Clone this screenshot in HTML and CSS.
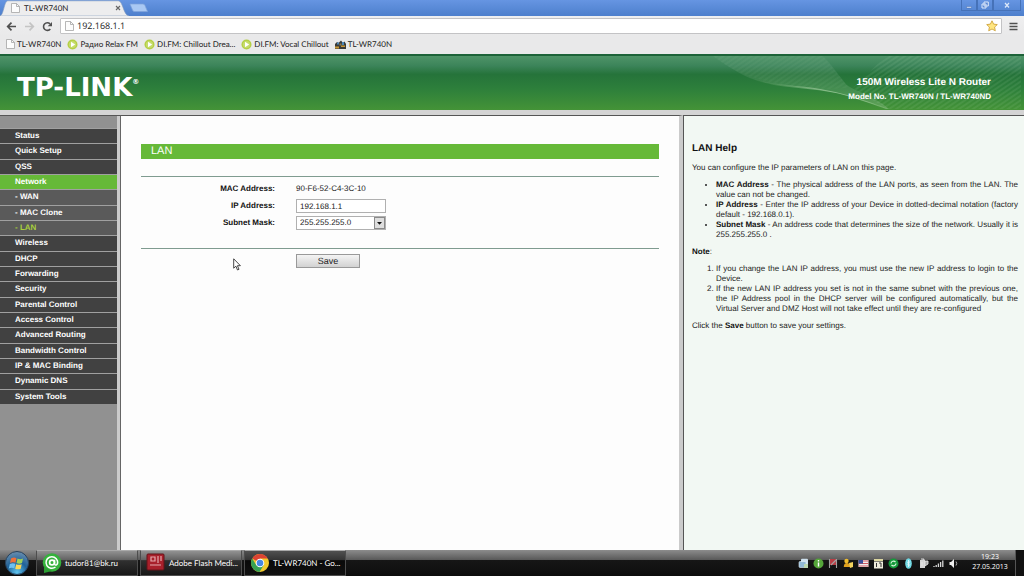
FILE: index.html
```html
<!DOCTYPE html>
<html lang="en">
<head>
<meta charset="utf-8">
<title>TL-WR740N</title>
<link rel="stylesheet" href="styles.css">
</head>
<body>
<svg width="0" height="0" class="defs" aria-hidden="true">
  <symbol id="page" viewBox="0 0 9 10"><path d="M.5.5h5l3 3v6h-8z" fill="#fcfcfc" stroke="#a5a5a5" stroke-width=".8"/><path d="M5.5.5v3h3" fill="none" stroke="#a5a5a5" stroke-width=".8"/></symbol>
  <symbol id="play" viewBox="0 0 11 11"><circle cx="5.500" cy="5.500" r="5" fill="#b4cf45"/><circle cx="5.500" cy="5.500" r="3.600" fill="#c6dc6c"/><path d="M4 2.700l4.200 2.800L4 8.300z" fill="#fff"/></symbol>
</svg>

<header class="browser">
  <div class="titlebar">
    <div class="tab">
      <svg class="tab-shape" viewBox="0 0 132 16" preserveAspectRatio="none"><path d="M0 16C4 15 4 1 8 .8H121C126 1 126 15 132 16z" fill="#ededee" stroke="#8099bd" stroke-width=".6"/></svg>
      <svg class="ico-page"><use href="#page"/></svg>
      <span>TL-WR740N</span>
      <button class="tab-close" aria-label="Close tab"><svg viewBox="0 0 6 6"><path d="M1 1l4 4M5 1L1 5" stroke="#666" stroke-width="1.100"/></svg></button>
    </div>
    <button class="new-tab" aria-label="New tab"><svg viewBox="0 0 20 10"><path d="M1 1h13q1.500 0 2 1.500l2.500 6h-13q-1.500 0-2-1.500z" fill="#a9c8f3" stroke="#7fa3da" stroke-width=".7"/></svg></button>
    <div class="window-buttons">
      <button aria-label="Minimize"><svg viewBox="0 0 8 8"><path d="M1.500 5.500h5v1.500h-5z" fill="#dce8fa" stroke="#385d9e" stroke-width=".4"/></svg></button>
      <button aria-label="Restore"><svg viewBox="0 0 8 8"><path d="M3 1h4.300v4H3zM1 3h4v4H1z" fill="#5b88d4" stroke="#dce8fa"/></svg></button>
      <button class="wide" aria-label="Close"><svg viewBox="0 0 8 8"><path d="M2 2l4 4.500M6 2L2 6.500" stroke="#dce8fa" stroke-width="1.200"/></svg></button>
    </div>
  </div>
  <div class="toolbar">
    <button aria-label="Back"><svg viewBox="0 0 11 10"><path d="M10 5H2M5.500 1.200L1.700 5l3.800 3.800" fill="none" stroke="#505050" stroke-width="1.700"/></svg></button>
    <button aria-label="Forward"><svg viewBox="0 0 11 10"><path d="M1 5h8M5.500 1.200L9.300 5 5.500 8.800" fill="none" stroke="#c4c4c4" stroke-width="1.700"/></svg></button>
    <button aria-label="Reload"><svg viewBox="0 0 11 10"><path d="M8.300 7.500A3.800 3.800 0 1 1 8 2.400" fill="none" stroke="#505050" stroke-width="1.600"/><path d="M10 .5v4.300H5.700z" fill="#505050"/></svg></button>
    <div class="omnibox">
      <svg class="ico-page"><use href="#page"/></svg>
      <input type="text" value="192.168.1.1" aria-label="Address">
      <button class="star" aria-label="Bookmark"><svg viewBox="0 0 12 12"><path d="M6 .8l1.600 3.300 3.700.5-2.700 2.500.7 3.700L6 9l-3.300 1.800.7-3.700L.7 4.600l3.700-.5z" fill="#ffe680" stroke="#c99b2e" stroke-width=".8"/></svg></button>
    </div>
    <button class="menu-button" aria-label="Menu"><svg viewBox="0 0 9 9"><path d="M.5 1.500h8M.5 4.500h8M.5 7.500h8" stroke="#505050" stroke-width="1.700"/></svg></button>
  </div>
  <nav class="bookmarks">
    <a href="#"><svg class="ico-page"><use href="#page"/></svg>TL-WR740N</a>
    <a href="#"><svg><use href="#play"/></svg>Радио Relax FM</a>
    <a href="#"><svg><use href="#play"/></svg>DI.FM: Chillout Drea...</a>
    <a href="#"><svg><use href="#play"/></svg>DI.FM: Vocal Chillout</a>
    <a href="#"><svg viewBox="0 0 11 11"><path d="M0 5l2-2 1.500 1L6 1.500 8 4l1.500-1.500L11 5v5H0z" fill="#3a3a38"/><path d="M2 3.500h2v2H2zM7 3h2v3H7z" fill="#4a86b8"/><path d="M0 7.500h4v2H0zM6 6.500h4v1.500H6z" fill="#c99735"/><path d="M4.500 4.500h2v2h-2z" fill="#8a7a50"/></svg>TL-WR740N</a>
  </nav>
</header>

<div class="banner">
  <svg class="banner-art" viewBox="0 0 320 56" preserveAspectRatio="none" aria-hidden="true">
    <defs>
      <pattern id="lines" width="5" height="4" patternUnits="userSpaceOnUse" patternTransform="rotate(-35)"><path d="M0 1h5" stroke="#b9e2bd" stroke-opacity=".25" stroke-width=".8"/></pattern>
      <linearGradient id="glow" x1="0" x2="0" y1="0" y2="1"><stop offset="0" stop-color="#fff" stop-opacity=".03"/><stop offset="1" stop-color="#fff" stop-opacity=".16"/></linearGradient>
      <linearGradient id="streak" x1="0" x2="1" y1="0" y2="0"><stop offset="0" stop-color="#c8e8c0" stop-opacity="0"/><stop offset=".6" stop-color="#c8e8c0" stop-opacity=".55"/><stop offset="1" stop-color="#c8e8c0" stop-opacity=".3"/></linearGradient>
    </defs>
    <path d="M12 0C32 14 44 24 68 28c30 5 56 6 80 14 18 6 30 9 40 13C172 40 150 36 144 28 136 18 130 8 122 0z" fill="url(#glow)"/>
    <path d="M50 23c20 7 40 7 62 10 20 3 40 9 54 14 10 4 18 6 22 8h-3c-10-4-26-9-40-14-22-7-50-7-72-11-10-2-18-4-23-7z" fill="url(#streak)"/>
    <path d="M185 0h135v55H188c-10-6-24-12-36-22z" fill="url(#lines)"/>
    <path d="M12 0h110l26 33-30 2C70 28 40 24 12 0z" fill="url(#lines)" fill-opacity=".5"/>
  </svg>
  <div class="logo">TP-LINK<sup>®</sup></div>
  <div class="model">
    <p class="model-name">150M Wireless Lite N Router</p>
    <p class="model-number">Model No. TL-WR740N / TL-WR740ND</p>
  </div>
</div>

<div class="frames">
  <nav class="sidebar">
    <ul>
      <li><a href="#">Status</a></li>
      <li><a href="#">Quick Setup</a></li>
      <li><a href="#">QSS</a></li>
      <li><a href="#" class="open">Network</a></li>
      <li><a href="#" class="sub">- WAN</a></li>
      <li><a href="#" class="sub">- MAC Clone</a></li>
      <li><a href="#" class="sub current">- LAN</a></li>
      <li><a href="#">Wireless</a></li>
      <li><a href="#">DHCP</a></li>
      <li><a href="#">Forwarding</a></li>
      <li><a href="#">Security</a></li>
      <li><a href="#">Parental Control</a></li>
      <li><a href="#">Access Control</a></li>
      <li><a href="#">Advanced Routing</a></li>
      <li><a href="#">Bandwidth Control</a></li>
      <li><a href="#">IP &amp; MAC Binding</a></li>
      <li><a href="#">Dynamic DNS</a></li>
      <li><a href="#">System Tools</a></li>
    </ul>
  </nav>

  <main class="content">
    <h1>LAN</h1>
    <form>
      <div class="fields">
        <span class="label">MAC Address:</span><span>90-F6-52-C4-3C-10</span>
        <label class="label" for="ip">IP Address:</label><input id="ip" type="text" value="192.168.1.1">
        <label class="label" for="mask">Subnet Mask:</label>
        <div class="select">
          <select id="mask"><option>255.255.255.0</option></select>
          <svg viewBox="0 0 11 12" aria-hidden="true"><rect x=".5" y=".5" width="10" height="11" fill="#dedede" stroke="#8a8a8a"/><path d="M3 5h5L5.500 7.800z" fill="#111"/></svg>
        </div>
      </div>
      <button class="save" type="button">Save</button>
    </form>
    <svg class="pointer" viewBox="0 0 8 13" aria-hidden="true"><path d="M.7.8v9.400l2.200-2 1.600 3.800 1.500-.7-1.600-3.600h3z" fill="#fff" stroke="#333" stroke-width=".9"/></svg>
  </main>

  <aside class="help">
    <h2>LAN Help</h2>
    <p>You can configure the IP parameters of LAN on this page.</p>
    <ul>
      <li><b>MAC Address</b> - The physical address of the LAN ports, as seen from the LAN. The value can not be changed.</li>
      <li><b>IP Address</b> - Enter the IP address of your Device in dotted-decimal notation (factory default - 192.168.0.1).</li>
      <li><b>Subnet Mask</b> - An address code that determines the size of the network. Usually it is 255.255.255.0 .</li>
    </ul>
    <p><b>Note</b>:</p>
    <ol>
      <li>If you change the LAN IP address, you must use the new IP address to login to the Device.</li>
      <li>If the new LAN IP address you set is not in the same subnet with the previous one, the IP Address pool in the DHCP server will be configured automatically, but the Virtual Server and DMZ Host will not take effect until they are re-configured</li>
    </ol>
    <p>Click the <b>Save</b> button to save your settings.</p>
  </aside>
</div>

<footer class="taskbar">
  <button class="start" aria-label="Start"><svg viewBox="0 0 26 26"><defs><radialGradient id="orb" cx=".5" cy=".9" r=".9"><stop offset="0" stop-color="#5fc4ee"/><stop offset=".5" stop-color="#1f6299"/><stop offset="1" stop-color="#6c8fae"/></radialGradient></defs><circle cx="13" cy="13" r="11.500" fill="url(#orb)" stroke="#26415c"/><path d="M7 8.500q3-1.700 5.500-.3l-1 4.600q-2.700-1.300-5.500.2z" fill="#ef7038"/><path d="M13.500 8.500q2.700 1.300 5.500 0l-1 4.600q-2.700 1.200-5.500 0z" fill="#a0d158"/><path d="M5.800 14q2.800-1.400 5.500-.2l-1 4.500q-2.700-1.200-5.500.2z" fill="#6fc0f0"/><path d="M12.200 14.200q2.700 1.200 5.500 0l-1 4.500q-2.700 1.200-5.500 0z" fill="#ffd753"/></svg></button>
  <button class="task"><svg viewBox="0 0 20 20"><circle cx="10" cy="9.500" r="9.300" fill="#35b23c"/><path d="M2 13l0 7 8-2z" fill="#2b9e32"/><circle cx="10" cy="9.500" r="2.400" fill="none" stroke="#fff" stroke-width="1.700"/><path d="M12.600 6.800v4q.3 1.700 1.800 1.200 1.800-1.200 1-4.200A5.800 5.800 0 1 0 13.500 14" fill="none" stroke="#fff" stroke-width="1.500"/></svg>tudor81@bk.ru</button>
  <button class="task"><svg viewBox="0 0 20 20"><rect x="1" y="1" width="17" height="16" rx="1" fill="#a8202b" stroke="#651219"/><path d="M5 4h4v4H5zM12 3v7M15 3v5M4 12h11" fill="none" stroke="#e4a9ad" stroke-width="1.200"/></svg>Adobe Flash Medi...</button>
  <button class="task active"><svg viewBox="0 0 20 20"><circle cx="10" cy="10" r="9" fill="#f3c92d"/><path d="M10 10L2.200 5.500A9 9 0 0 1 17.800 5.500H10z" fill="#dc4333"/><path d="M2.200 5.500A9 9 0 0 0 9.500 19l4.300-7L10 10l-3.800 2z" fill="#36a153"/><circle cx="10" cy="10" r="4.300" fill="#fff"/><circle cx="10" cy="10" r="3.300" fill="#4787e2"/></svg>TL-WR740N - Go...</button>
  <div class="tray">
    <svg viewBox="0 0 11 11"><rect x="3" y=".8" width="7" height="6" rx="1" fill="#cfe1ee"/><rect x="1" y="3.500" width="7" height="6" rx="1" fill="#91b9d6" stroke="#e8f3fa" stroke-width=".6"/><path d="M6 6h4v4H6z" fill="#bbd7b1"/></svg>
    <svg viewBox="0 0 11 11"><circle cx="5.500" cy="5.500" r="5" fill="#55a63a"/><path d="M5.500 2v1.500M5.500 4.500v4" stroke="#fff" stroke-width="1.400"/></svg>
    <svg viewBox="0 0 11 11"><path d="M1 1h8v6H1z" fill="#b93c43"/><path d="M1.500 1v9M8.500 1v9M3 7l5-5" stroke="#a2a2a2" stroke-width="1.100"/></svg>
    <svg viewBox="0 0 11 11"><circle cx="3.500" cy="3" r="2.200" fill="#f0bd2c"/><path d="M.8 9q0-4 3-4t4 4z" fill="#e0a11f"/><path d="M6 5l4-1v5l-3 1z" fill="#f3d25e"/></svg>
    <svg viewBox="0 0 11 11"><rect x=".5" y="2" width="10" height="7" fill="#f1eded"/><path d="M.5 3h10M.5 5.500h10M.5 8h10" stroke="#cf5b62" stroke-width="1.100"/><path d="M.5 2h4.500v3.600H.5z" fill="#394f9a"/></svg>
    <svg viewBox="0 0 11 11"><path d="M1 3.500h9v7H1z" fill="#f0eddd"/><path d="M1 1h9v2H1z" fill="#ddd7a1"/><path d="M3.500 5v4M6 5h2v4" fill="none" stroke="#333"/></svg>
    <svg viewBox="0 0 11 11"><circle cx="5.500" cy="5.500" r="5" fill="#15983a"/><path d="M3 5.500a2.500 2.500 0 0 1 4.500-1.300M8 5.500a2.500 2.500 0 0 1-4.500 1.300" fill="none" stroke="#d8f3dc" stroke-width="1.200"/></svg>
    <svg viewBox="0 0 11 11"><ellipse cx="5.500" cy="5.500" rx="3.300" ry="5.200" fill="#70d9e4"/><path d="M5.500 2v7M4 3.800l3 3-1.500 1.500v-6L7 3.800l-3 3" fill="none" stroke="#e4fbff" stroke-width=".7"/></svg>
    <svg viewBox="0 0 11 11"><path d="M2 2h5v8H2z" fill="#d7d7d7"/><path d="M3 1h3v1M7 3h3v3L7 8zM4 8V4" fill="#aaa" stroke="#eee" stroke-width=".8"/></svg>
    <svg viewBox="0 0 11 11"><path d="M1 9V8M3.200 9V7M5.400 9V5.500M7.600 9V4M9.800 9V2.500" stroke="#d8d8d8" stroke-width="1.300"/></svg>
    <svg viewBox="0 0 11 11"><path d="M1.500 4H3l3-3v9L3 7H1.500z" fill="#f0f0f0"/><path d="M8 3.500q1.500 2 0 4" fill="none" stroke="#aaa"/></svg>
    <div class="clock"><time>19:23</time><time>27.05.2013</time></div>
  </div>
  <button class="show-desktop" aria-label="Show desktop"></button>
</footer>
</body>
</html>
```
FILE: styles.css
```css
* { box-sizing: border-box; }

body {
  margin: 0;
  min-height: 100vh;
  display: flex;
  flex-direction: column;
  font: 8px/10px "Liberation Sans", Arial, sans-serif;
  text-rendering: geometricPrecision;
  color: #222;
  background: #fff;
}

button, input, select { font: inherit; color: inherit; margin: 0; padding: 0; text-rendering: inherit; }
button { border: 0; background: none; }
svg { display: block; flex: none; }
a { color: inherit; text-decoration: none; }
p, h1, h2, ul, ol { margin: 0; padding: 0; }
.defs { position: absolute; }

/* Browser window */
.browser { font-family: Lato, "Open Sans", sans-serif; background: #e9e9ea; }
.browser svg { width: 11px; height: 11px; }
.browser .ico-page { width: 9px; height: 10px; }
.titlebar {
  display: flex;
  height: 16px;
  background: linear-gradient(#6695e2, #4d7fcc);
}
.tab {
  position: relative;
  display: flex;
  align-items: center;
  gap: 4px;
  width: 129px;
  padding: 0 8px 0 11px;
}
.tab > * { position: relative; }
.browser .tab-shape { position: absolute; inset: 0; width: 100%; height: 100%; }
.tab-close { margin-left: auto; }
.browser .tab-close svg { width: 6px; height: 6px; }
.browser .new-tab svg { width: 20px; height: 10px; }
.window-buttons { display: flex; margin: 0 3px 0 auto; height: 11px; }
.window-buttons button {
  display: grid;
  place-items: center;
  width: 16px;
  border: 1px solid #4672b8;
  border-top: 0;
}
.window-buttons .wide { width: 28px; }
.browser .window-buttons svg { width: 8px; height: 8px; }
.toolbar {
  display: flex;
  align-items: center;
  gap: 7px;
  height: 20px;
  padding: 2px 6px;
  background: linear-gradient(#efeff0, #e9e9ea);
}
.omnibox {
  flex: 1;
  display: flex;
  align-items: center;
  gap: 3px;
  height: 16px;
  padding: 0 3px 0 4px;
  border: 1px solid #c3c3c5;
  border-radius: 1px;
  background: #fff;
}
.omnibox input { flex: 1; min-width: 0; border: 0; outline: 0; font-family: "Open Sans", sans-serif; font-size: 9px; }
.browser .star svg { width: 12px; height: 12px; }
.browser .menu-button svg { width: 9px; height: 9px; }
.bookmarks { display: flex; align-items: center; gap: 6px; height: 18px; padding: 0 6px 2px; }
.bookmarks a { display: flex; align-items: center; gap: 2px; white-space: nowrap; }

/* Router header */
.banner {
  position: relative;
  display: flex;
  justify-content: space-between;
  align-items: center;
  height: 56px;
  padding: 10px 33px 0 17px;
  color: #fff;
  border-top: 2px solid #1d6339;
  background: linear-gradient(#4f9468, #3c845a 18%, #25733a 34%, #2d7f3b 60%, #449337);
}
.banner > * { position: relative; }
.banner .banner-art { position: absolute; top: 0; right: 3px; width: 320px; height: 100%; }
.logo { display: flex; font: bold 26px/26px "DejaVu Sans", Verdana, sans-serif; }
.logo sup { font-size: 7px; line-height: 14px; vertical-align: top; }
.model { padding-top: 4px; font-weight: bold; text-align: right; }
.model-name { font-size: 10px; line-height: 14px; }
.model-number { font-size: 8px; line-height: 14px; }

/* Three frames */
.frames {
  flex: 1;
  display: grid;
  grid-template-columns: 121px minmax(0, 1fr) 341px;
  border-top: 5px solid #d4d4d4;
}
.sidebar, .content, .help { border-top: 1px solid #555; }
.sidebar { padding-top: 12px; border-right: 1px solid #666; background: linear-gradient(90deg, #919191 117px, #cbcbcb 117px); }
.sidebar ul {
  display: grid;
  grid-auto-rows: 1fr;
  height: 276px;
  margin-right: 3px;
  list-style: none;
}
.sidebar li { display: grid; border-top: 1px solid #a0a0a0; }
.sidebar a {
  display: flex;
  align-items: center;
  padding-left: 15px;
  font-weight: bold;
  color: #fff;
  background: #414141;
}
.sidebar .open { background: #66b938; }
.sidebar .sub { background: #5a5a5a; }
.sidebar .current { color: #a8cf3a; }

.content { position: relative; padding: 28px 20px 0; border-right: 4px solid #cbcbcb; background: #fdfdfd; }
.content h1 {
  padding-left: 10px;
  font-size: 11px;
  font-weight: normal;
  line-height: 15px;
  color: #fff;
  background: #66b938;
}
.fields {
  display: grid;
  grid-template-columns: 134px 90px;
  grid-auto-rows: 14px;
  column-gap: 21px;
  row-gap: 3px;
  align-items: center;
  margin-top: 17px;
  padding: 5px 0 18px;
  border: solid #7f9b90;
  border-width: 1px 0;
}
.label { font-weight: bold; text-align: right; color: #111; }
.fields input, .select select {
  width: 100%;
  height: 14px;
  padding: 0 3px;
  border: 1px solid #b0b0b0;
  background: #fff;
}
.select { position: relative; }
.select select { display: block; appearance: none; }
.select svg { position: absolute; top: 1px; right: 1px; width: 11px; height: 12px; pointer-events: none; }
.save {
  display: block;
  width: 64px;
  height: 14px;
  margin: 5px 0 0 155px;
  font-size: 9px;
  border: 1px solid #999;
  background: linear-gradient(#f4f4f4, #d2d2d2);
}
.pointer { position: absolute; left: 112px; top: 142px; width: 8px; height: 13px; }

.help { padding: 26px 6px 0 8px; border-left: 1px solid #555; background: #f2f8f3; text-align: justify; }
.help h2 { font-size: 10px; line-height: 14px; color: #111; }
.help p { margin: 7px 0; }
.help ul, .help ol { padding-left: 24px; }
.help b { color: #111; }

/* Taskbar */
.taskbar {
  display: flex;
  height: 26px;
  font-family: Lato, "Open Sans", sans-serif;
  color: #fff;
  background: linear-gradient(#8c8c8c, #5a5a5a 37%, #161616 40%, #0d0d0d);
}
.start { width: 36px; padding-left: 4px; }
.start svg { width: 26px; height: 26px; }
.task {
  display: flex;
  align-items: center;
  gap: 3px;
  width: 102px;
  margin-right: 2px;
  padding-left: 5px;
  white-space: nowrap;
  border: 1px solid #4d4d4d;
  border-top-color: #aaa;
  background: linear-gradient(#929292, #626262 37%, #303030 40%, #171717);
}
.task svg { width: 20px; height: 20px; }
.task.active { background: linear-gradient(#505050, #343434 37%, #090909 40%, #111); }
.tray { display: flex; align-items: center; gap: 4px; margin-left: auto; }
.tray svg { width: 11px; height: 11px; }
.clock { display: grid; width: 48px; margin-left: 3px; text-align: center; font: 7px/10px "Open Sans", sans-serif; }
.show-desktop { width: 9px; margin-left: 1px; border-left: 1px solid #555; background: #111; }
```
